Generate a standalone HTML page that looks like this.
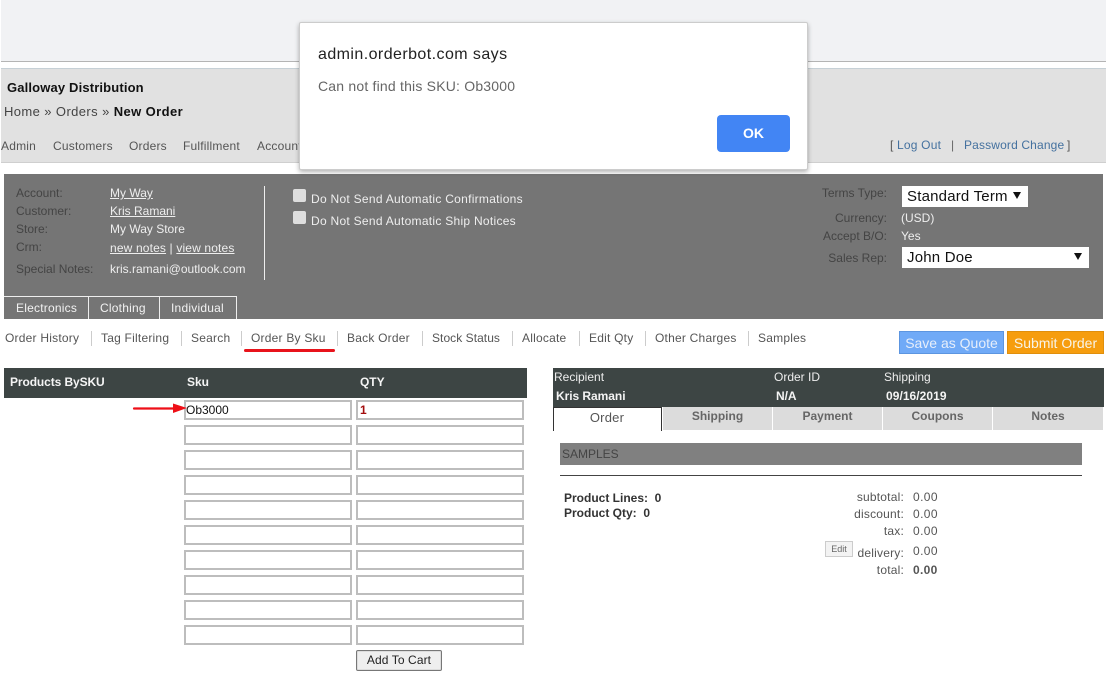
<!DOCTYPE html>
<html><head><meta charset="utf-8"><title>New Order</title>
<style>
html,body{margin:0;padding:0;background:#fff}
#p{position:relative;width:1106px;height:680px;overflow:hidden;background:#fff;font-family:"Liberation Sans",sans-serif;font-size:12px;color:#555;letter-spacing:.2px}
#p div{position:absolute}
.t{white-space:nowrap;line-height:16px;height:16px}
.l{color:#444;letter-spacing:0}.v{color:#eee;letter-spacing:0}
.u{text-decoration:underline}
.r{text-align:right;width:100px}
.sep{width:1px;height:15px;top:331px;background:#ccc}
.sn{top:330px;color:#555;letter-spacing:.22px}
.in{width:164px;height:16px;border:2px solid #bdbdbd;background:#fff;box-sizing:content-box}
.tab{top:407px;height:23px;background:#dcdcdc;text-align:center;font-weight:bold;color:#666;line-height:19px;letter-spacing:0}
.wt{color:#f2f2f2;letter-spacing:.22px}
.bw{color:#f4f4f4;font-weight:bold;letter-spacing:-.05px}
</style></head><body>
<div id="p">
<div style="left:1px;top:0;width:1105px;height:61px;background:#f1f2f4"></div>
<div style="left:1px;top:61px;width:1105px;height:1px;background:#b4b4b4"></div>
<div style="left:1px;top:68px;width:1105px;height:95px;background:#e1e1e1;border-top:1px solid #c6d0d6;border-bottom:1px solid #cfcfcf;box-sizing:border-box"></div>
<div class="t" style="left:7px;top:80px;font-weight:bold;font-size:13px;color:#111;letter-spacing:.15px">Galloway Distribution</div>
<div class="t" style="left:4px;top:104px;font-size:13px;color:#444;letter-spacing:.4px">Home » Orders » <b style="color:#111">New Order</b></div>
<div class="t" style="left:1px;top:138px">Admin</div>
<div class="t" style="left:53px;top:138px">Customers</div>
<div class="t" style="left:129px;top:138px">Orders</div>
<div class="t" style="left:183px;top:138px">Fulfillment</div>
<div class="t" style="left:257px;top:138px">Accounting</div>
<div class="t" style="left:890px;top:137px;color:#555">[</div>
<div class="t" style="left:897px;top:137px;color:#44719f">Log Out</div>
<div class="t" style="left:951px;top:137px;color:#666">|</div>
<div class="t" style="left:964px;top:137px;color:#44719f;letter-spacing:.15px">Password Change</div>
<div class="t" style="left:1067px;top:137px;color:#555">]</div>

<div style="left:4px;top:174px;width:1099px;height:145px;background:#757575"></div>
<div class="t l" style="left:16px;top:185px">Account:</div>
<div class="t l" style="left:16px;top:203px">Customer:</div>
<div class="t l" style="left:16px;top:221px">Store:</div>
<div class="t l" style="left:16px;top:239px">Crm:</div>
<div class="t l" style="left:16px;top:261px">Special Notes:</div>
<div class="t v u" style="left:110px;top:185px">My Way</div>
<div class="t v u" style="left:110px;top:203px">Kris Ramani</div>
<div class="t v" style="left:110px;top:221px">My Way Store</div>
<div class="t v" style="left:110px;top:240px;letter-spacing:.15px"><span class="u">new notes</span> | <span class="u">view notes</span></div>
<div class="t v" style="left:110px;top:261px">kris.ramani@outlook.com</div>
<div style="left:264px;top:186px;width:1px;height:94px;background:#eee"></div>
<div style="left:293px;top:189px;width:13px;height:13px;background:#dedede;border-radius:2px"></div>
<div style="left:293px;top:211px;width:13px;height:13px;background:#dedede;border-radius:2px"></div>
<div class="t v" style="left:311px;top:191px;letter-spacing:.28px">Do Not Send Automatic Confirmations</div>
<div class="t v" style="left:311px;top:213px;letter-spacing:.28px">Do Not Send Automatic Ship Notices</div>
<div class="t l r" style="left:787px;top:185px">Terms Type:</div>
<div class="t l r" style="left:787px;top:210px">Currency:</div>
<div class="t l r" style="left:787px;top:228px">Accept B/O:</div>
<div class="t l r" style="left:787px;top:250px">Sales Rep:</div>
<div class="t v" style="left:901px;top:210px">(USD)</div>
<div class="t v" style="left:901px;top:228px">Yes</div>
<div style="left:902px;top:186px;width:126px;height:21px;background:#fff"></div>
<div class="t" style="left:907px;top:188px;font-size:15px;line-height:18px;height:18px;color:#111">Standard Term</div>
<div style="left:1013px;top:192px;width:0;height:0;border:4px solid transparent;border-top:7px solid #111;border-bottom:0"></div>
<div style="left:902px;top:247px;width:187px;height:21px;background:#fff"></div>
<div class="t" style="left:907px;top:249px;font-size:15px;line-height:18px;height:18px;color:#111">John Doe</div>
<div style="left:1074px;top:253px;width:0;height:0;border:4px solid transparent;border-top:7px solid #111;border-bottom:0"></div>
<div style="left:4px;top:296px;width:84px;height:23px;border-top:1px solid #eee;box-sizing:border-box"></div>
<div style="left:89px;top:296px;width:71px;height:23px;border:1px solid #eee;border-bottom:0;border-left:0;box-sizing:border-box"></div>
<div style="left:160px;top:296px;width:77px;height:23px;border:1px solid #eee;border-bottom:0;border-left:0;box-sizing:border-box"></div>
<div style="left:88px;top:296px;width:1px;height:23px;background:#eee"></div>
<div class="t wt" style="left:16px;top:300px">Electronics</div>
<div class="t wt" style="left:100px;top:300px">Clothing</div>
<div class="t wt" style="left:171px;top:300px">Individual</div>

<div class="t sn" style="left:5px">Order History</div><div class="sep" style="left:91px"></div>
<div class="t sn" style="left:101px">Tag Filtering</div><div class="sep" style="left:181px"></div>
<div class="t sn" style="left:191px">Search</div><div class="sep" style="left:241px"></div>
<div class="t sn" style="left:251px">Order By Sku</div><div class="sep" style="left:337px"></div>
<div class="t sn" style="left:347px">Back Order</div><div class="sep" style="left:422px"></div>
<div class="t sn" style="left:432px;letter-spacing:.05px">Stock Status</div><div class="sep" style="left:512px"></div>
<div class="t sn" style="left:522px">Allocate</div><div class="sep" style="left:579px"></div>
<div class="t sn" style="left:589px">Edit Qty</div><div class="sep" style="left:645px"></div>
<div class="t sn" style="left:655px">Other Charges</div><div class="sep" style="left:748px"></div>
<div class="t sn" style="left:758px">Samples</div>
<div style="left:244px;top:349px;width:91px;height:3px;background:#e8131b;border-radius:2px"></div>
<div style="left:899px;top:331px;width:105px;height:23px;background:#70aaf7;border:1px solid #5c95e0;box-sizing:border-box;color:#e6eefa;font-size:14px;line-height:22px;text-align:center;letter-spacing:0">Save as Quote</div>
<div style="left:1007px;top:331px;width:97px;height:23px;background:#f69d0e;border:1px solid #e08f0c;box-sizing:border-box;color:#f8f4e8;font-size:14px;line-height:22px;text-align:center;letter-spacing:0">Submit Order</div>

<div style="left:4px;top:368px;width:523px;height:30px;background:#3d4544"></div>
<div class="t bw" style="left:10px;top:374px;letter-spacing:-.1px">Products BySKU</div>
<div class="t bw" style="left:187px;top:374px">Sku</div>
<div class="t bw" style="left:360px;top:374px">QTY</div>
<div class="in" style="left:184px;top:400px"></div><div class="in" style="left:356px;top:400px"></div>
<div class="in" style="left:184px;top:425px"></div><div class="in" style="left:356px;top:425px"></div>
<div class="in" style="left:184px;top:450px"></div><div class="in" style="left:356px;top:450px"></div>
<div class="in" style="left:184px;top:475px"></div><div class="in" style="left:356px;top:475px"></div>
<div class="in" style="left:184px;top:500px"></div><div class="in" style="left:356px;top:500px"></div>
<div class="in" style="left:184px;top:525px"></div><div class="in" style="left:356px;top:525px"></div>
<div class="in" style="left:184px;top:550px"></div><div class="in" style="left:356px;top:550px"></div>
<div class="in" style="left:184px;top:575px"></div><div class="in" style="left:356px;top:575px"></div>
<div class="in" style="left:184px;top:600px"></div><div class="in" style="left:356px;top:600px"></div>
<div class="in" style="left:184px;top:625px"></div><div class="in" style="left:356px;top:625px"></div>
<div class="t" style="left:186px;top:402px;color:#111;letter-spacing:0">Ob3000</div>
<div class="t" style="left:360px;top:402px;color:#a30d0d;font-weight:bold">1</div>
<svg style="position:absolute;left:130px;top:400px" width="60" height="16"><path d="M4 8.5H44" stroke="#ee0f17" stroke-width="2.2" stroke-linecap="round"/><path d="M43 3.5L57 8L43 13Z" fill="#ee0f17"/></svg>
<div style="left:356px;top:650px;width:86px;height:21px;background:#efefef;border:1px solid #777;box-sizing:border-box;border-radius:2px;box-shadow:inset 0 0 0 1px #ddd;color:#222;line-height:19px;text-align:center;letter-spacing:.1px">Add To Cart</div>

<div style="left:553px;top:368px;width:551px;height:39px;background:#3d4544"></div>
<div class="t" style="left:554px;top:369px;color:#eee;letter-spacing:0">Recipient</div>
<div class="t" style="left:774px;top:369px;color:#eee;letter-spacing:0">Order ID</div>
<div class="t" style="left:884px;top:369px;color:#eee;letter-spacing:0">Shipping</div>
<div class="t bw" style="left:556px;top:388px">Kris Ramani</div>
<div class="t bw" style="left:776px;top:388px">N/A</div>
<div class="t bw" style="left:886px;top:388px;letter-spacing:.05px">09/16/2019</div>
<div style="left:553px;top:407px;width:109px;height:24px;background:#fff;border:1px solid #333;border-width:1px 1px 0 1px;box-sizing:border-box;text-align:center;color:#555;font-size:13px;line-height:20px;padding-right:1px">Order</div>
<div class="tab" style="left:663px;width:109px">Shipping</div>
<div class="tab" style="left:773px;width:109px">Payment</div>
<div class="tab" style="left:883px;width:109px">Coupons</div>
<div class="tab" style="left:993px;width:110px">Notes</div>
<div style="left:560px;top:443px;width:522px;height:22px;background:#808080"></div>
<div class="t" style="left:562px;top:446px;color:#444;letter-spacing:0">SAMPLES</div>
<div style="left:560px;top:475px;width:522px;height:1px;background:#444"></div>
<div class="t" style="left:564px;top:490px;color:#333;font-weight:bold;letter-spacing:0">Product Lines:&nbsp; 0</div>
<div class="t" style="left:564px;top:505px;color:#333;font-weight:bold;letter-spacing:0">Product Qty:&nbsp; 0</div>
<div class="t r" style="left:804px;top:489px">subtotal:</div><div class="t" style="left:913px;top:489px;letter-spacing:.4px">0.00</div>
<div class="t r" style="left:804px;top:506px">discount:</div><div class="t" style="left:913px;top:506px;letter-spacing:.4px">0.00</div>
<div class="t r" style="left:804px;top:523px">tax:</div><div class="t" style="left:913px;top:523px;letter-spacing:.4px">0.00</div>
<div class="t r" style="left:804px;top:545px">delivery:</div><div class="t" style="left:913px;top:543px;letter-spacing:.4px">0.00</div>
<div class="t r" style="left:804px;top:562px">total:</div><div class="t" style="left:913px;top:562px;font-weight:bold;letter-spacing:.3px">0.00</div>
<div style="left:825px;top:541px;width:28px;height:16px;background:#f3f3f3;border:1px solid #ccc;box-sizing:border-box;font-size:9px;line-height:14px;text-align:center;color:#666;letter-spacing:0">Edit</div>

<div style="left:299px;top:22px;width:509px;height:148px;background:#fff;border-radius:2px;border:1px solid #ccc;box-sizing:border-box;box-shadow:0 2px 5px rgba(0,0,0,.3)"></div>
<div class="t" style="left:318px;top:46px;font-size:16px;line-height:18px;height:18px;color:#222;letter-spacing:.43px">admin.orderbot.com says</div>
<div class="t" style="left:318px;top:78px;font-size:14px;color:#666;letter-spacing:.2px">Can not find this SKU: Ob3000</div>
<div style="left:717px;top:115px;width:73px;height:37px;background:#4285f4;border-radius:4px;color:#fff;font-weight:bold;font-size:14px;line-height:36px;text-align:center;letter-spacing:0">OK</div>
</div>
</body></html>
